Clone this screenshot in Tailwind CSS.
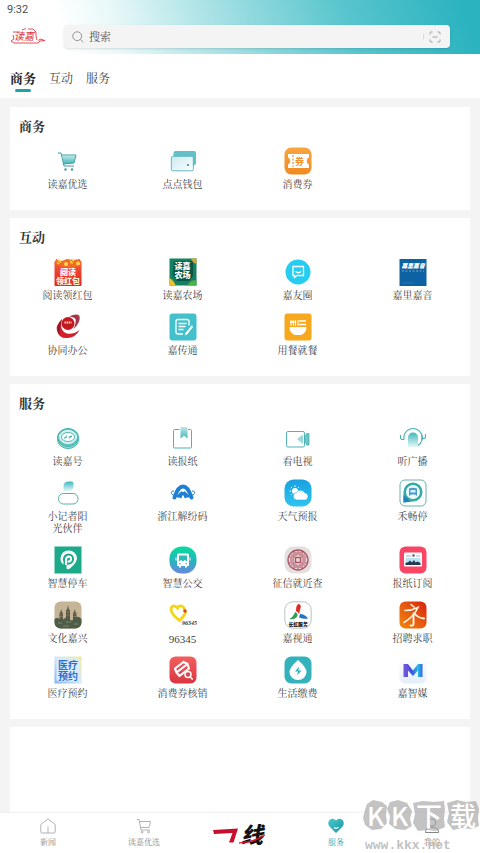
<!DOCTYPE html>
<html lang="zh-CN">
<head>
    <meta charset="UTF-8">
    <meta name="viewport" content="width=device-width, initial-scale=1.0">
    <title>读嘉 - 服务</title>
    <script src="https://cdn.jsdelivr.net/npm/@tailwindcss/browser@4"></script>
</head>
<body class="h-screen flex flex-col overflow-hidden bg-[#f4f4f4] text-[#333] font-['Liberation_Serif','Noto_Serif_CJK_SC','Noto_Sans_CJK_SC',serif]">

    <!-- gradientes compartilhados -->
    <svg class="absolute w-0 h-0" aria-hidden="true">
        <defs>
            <linearGradient id="teal" x1="0" y1="0" x2="0" y2="1"><stop offset="0" stop-color="#3fb9be"/><stop offset="1" stop-color="#e6f7f7"/></linearGradient>
            <linearGradient id="tealUp" x1="0" y1="0" x2="0" y2="1"><stop offset="0" stop-color="#bfe8e8"/><stop offset="1" stop-color="#3db6bb"/></linearGradient>
            <linearGradient id="wallet" x1="0" y1="0" x2="1" y2="1"><stop offset="0" stop-color="#c9e9ee"/><stop offset="1" stop-color="#ffffff"/></linearGradient>
            <linearGradient id="orange" x1="0" y1="0" x2="0" y2="1"><stop offset="0" stop-color="#f9a53f"/><stop offset="1" stop-color="#f08a1f"/></linearGradient>
            <linearGradient id="red" x1="0" y1="0" x2="0" y2="1"><stop offset="0" stop-color="#f4593c"/><stop offset="1" stop-color="#e3251f"/></linearGradient>
            <linearGradient id="sky" x1="0" y1="0" x2="0" y2="1"><stop offset="0" stop-color="#19a0e0"/><stop offset="1" stop-color="#2fc4f0"/></linearGradient>
            <linearGradient id="bus" x1="0" y1="0" x2="0" y2="1"><stop offset="0" stop-color="#06dc9c"/><stop offset="0.5" stop-color="#25b7bb"/><stop offset="1" stop-color="#6a86e0"/></linearGradient>
            <linearGradient id="fire" x1="0" y1="1" x2="1" y2="0"><stop offset="0" stop-color="#f2870c"/><stop offset="0.5" stop-color="#e85a10"/><stop offset="1" stop-color="#d5210c"/></linearGradient>
            <linearGradient id="med" x1="0" y1="1" x2="1" y2="0"><stop offset="0" stop-color="#7fb4f5"/><stop offset="0.5" stop-color="#d3e9fb"/><stop offset="1" stop-color="#f6e99a"/></linearGradient>
            <linearGradient id="rose" x1="0" y1="0" x2="0" y2="1"><stop offset="0" stop-color="#f0605f"/><stop offset="1" stop-color="#dc3540"/></linearGradient>
            <linearGradient id="mm" x1="0" y1="0" x2="1" y2="0"><stop offset="0" stop-color="#7a52dc"/><stop offset="0.45" stop-color="#3a55d8"/><stop offset="0.75" stop-color="#25c2e8"/><stop offset="1" stop-color="#3d62da"/></linearGradient>
            <linearGradient id="mbg" x1="0" y1="0" x2="0" y2="1"><stop offset="0" stop-color="#ffffff"/><stop offset="1" stop-color="#e3eefb"/></linearGradient>
            <linearGradient id="heart" x1="0" y1="0" x2="1" y2="1"><stop offset="0" stop-color="#4cc9cd"/><stop offset="1" stop-color="#1695a4"/></linearGradient>
        </defs>
    </svg>

    <header class="shrink-0 bg-[linear-gradient(72deg,#fff_14%,#e9f8f8_25%,#93dadf_52%,#58c5cd_72%,#2bb3c0_96%)]">
        <div class="h-5 pl-[7px] text-[11px] leading-5 text-[#3f5255] font-[Roboto,sans-serif]">9:32</div>
        <div class="flex items-center pl-2.5 pr-[30px] pt-[5px] pb-[6px]">
            <svg class="w-9 h-5 mr-[18px] shrink-0 overflow-visible" viewBox="0 0 36 20" role="img" aria-label="读嘉">
                <path d="M3 5h7M12 3l4-1.500M18 2h5l3 3v4l1 4M3 8l1 4-3 2 3 2h24l2-2 5-.5-5-1.500-1.500 2" fill="none" stroke="#df3b45" stroke-width="0.9"/>
                <text x="4" y="13" font-size="10" fill="#d9303b" font-style="italic" font-family="Noto Sans CJK SC, sans-serif">读嘉</text>
            </svg>
            <label class="flex-1 flex items-center h-[23px] px-2 rounded-sm bg-[#f4f4f4] shadow-sm">
                <svg class="w-3 h-3 mr-[5px]" viewBox="0 0 12 12" fill="none" stroke="#888" stroke-width="0.9"><circle cx="5.2" cy="5.2" r="4.4"/><path d="M8.4 8.4l3 3"/></svg>
                <input type="search" placeholder="搜索" aria-label="搜索" class="flex-1 min-w-0 bg-transparent outline-none text-[11px] leading-4 placeholder:text-[#555]">
                <span class="w-px h-1.5 mr-1 bg-[#ddd]"></span>
                <button type="button" aria-label="扫一扫">
                    <svg class="w-3.5 h-3.5 block" viewBox="0 0 14 14" fill="none" stroke="#999" stroke-width="0.9"><path d="M2 4.500V3a1 1 0 011-1h1.500M9.500 2H11a1 1 0 011 1v1.500M12 9.500V11a1 1 0 01-1 1H9.500M4.500 12H3a1 1 0 01-1-1V9.500M4.500 7h5"/></svg>
                </button>
            </label>
        </div>
    </header>

    <nav class="shrink-0 h-11 flex items-start gap-[13px] pl-2.5 pt-4 bg-white text-[12px] leading-[18px] text-[#444]">
        <a href="#s1" class="flex flex-col items-center text-[13px] font-bold text-[#222]">商务<span class="w-4 h-[3px] mt-px rounded-full bg-[#1fa3a9]"></span></a>
        <a href="#s2">互动</a>
        <a href="#s3">服务</a>
    </nav>

    <main class="flex-1 min-h-0 overflow-hidden flex flex-col gap-2 px-2.5 pt-[9px]">
        <section id="s1" class="shrink-0 bg-white pt-2.5 pb-[19px]">
            <h2 class="pl-[9px] text-[13px] leading-5 font-bold">商务</h2>
            <div class="grid grid-cols-4 gap-y-[11px] mt-2.5 text-[10px] leading-3 text-center text-[#444]">
                <a href="#" class="flex flex-col items-center gap-1">
                    <svg class="w-7 h-7" viewBox="0 0 28 28"><path d="M8.500 8.500l13 .5-2 7-10 1z" fill="url(#tealUp)"/><path d="M4 6h3l3 13h10M8 8h14l-2 8-10.500 1" fill="none" stroke="#3a9ea4" stroke-width="1"/><circle cx="11.500" cy="22.500" r="1.200" fill="#3a9ea4"/><circle cx="18" cy="22.500" r="1.200" fill="#3a9ea4"/></svg>
                    <span>读嘉优选</span>
                </a>
                <a href="#" class="flex flex-col items-center gap-1">
                    <svg class="w-7 h-7" viewBox="0 0 28 28"><path d="M4.500 9V6a2 2 0 012-2H25a2 2 0 012 2v11l-3 2V9z" fill="#62c0c9"/><rect x="2.300" y="9.300" width="22" height="14.500" rx="1.500" fill="url(#wallet)" stroke="#4fb3bc" stroke-width="0.9"/><circle cx="19" cy="18" r="1.100" fill="#3a8f98"/></svg>
                    <span>点点钱包</span>
                </a>
                <a href="#" class="flex flex-col items-center gap-1">
                    <svg class="w-7 h-7" viewBox="0 0 28 28"><rect x="0.500" y="0.500" width="27" height="27" rx="7" fill="url(#orange)"/><path d="M4 7h21v3.500c-3 1-3 6 0 7V21H4v-3.500c3-1 3-6 0-7z" fill="#fff"/><path d="M9 8v12" stroke="#c77a2a" stroke-width="1" stroke-dasharray="2 1.500"/><text x="11" y="17.500" font-size="9" font-weight="bold" fill="#f0912a" font-family="Noto Sans CJK SC, sans-serif">券</text></svg>
                    <span>消费券</span>
                </a>
            </div>
        </section>

        <section id="s2" class="shrink-0 bg-white pt-2.5 pb-[19px]">
            <h2 class="pl-[9px] text-[13px] leading-5 font-bold">互动</h2>
            <div class="grid grid-cols-4 gap-y-[11px] mt-2.5 text-[10px] leading-3 text-center text-[#444]">
                <a href="#" class="flex flex-col items-center gap-1">
                    <svg class="w-7 h-7 overflow-visible" viewBox="0 0 28 28" font-family="Noto Sans CJK SC, sans-serif" font-weight="900" fill="#fff"><rect x="0.500" y="3" width="27" height="25" rx="1" fill="url(#red)"/><path d="M.5 6L2 1l6 2 5-2 6 1 7-1 1.500 6q-14 6-27-1z" fill="#f26a24"/><circle cx="5" cy="4" r="2.300" fill="#ffc93c"/><circle cx="12" cy="6" r="2" fill="#ffd95a"/><circle cx="18" cy="3.500" r="2.200" fill="#ffc23a"/><circle cx="24" cy="5.500" r="2" fill="#ffd34d"/><path d="M3 3l4 3M17 2l3 3" stroke="#d9401c" stroke-width="0.8"/><text x="6" y="17" font-size="8">阅读</text><text x="2" y="26" font-size="8" fill="#fff3d6">领红包</text></svg>
                    <span>阅读领红包</span>
                </a>
                <a href="#" class="flex flex-col items-center gap-1">
                    <svg class="w-7 h-7" viewBox="0 0 28 28" font-family="Noto Sans CJK SC, sans-serif" font-weight="900" fill="#fff"><rect x="0.500" y="0.500" width="27" height="27" fill="#13805f"/><path d="M5 3h19v15l-4 5H8l-4-5z" fill="#085745"/><path d="M.5 20q5 3 6 7.500h-6z" fill="#f0bf2a"/><path d="M22 .5h5.500v5.500q-4-1-5.500-5.500z" fill="#caa83a"/><path d="M18 27.500q4-6 9.500-5v5z" fill="#4fae4e"/><text x="5.500" y="11" font-size="8">读嘉</text><text x="5.500" y="20" font-size="8">农场</text></svg>
                    <span>读嘉农场</span>
                </a>
                <a href="#" class="flex flex-col items-center gap-1">
                    <svg class="w-7 h-7" viewBox="0 0 28 28"><circle cx="14" cy="14" r="12.500" fill="#27cdf0"/><path d="M9 8.500h10.500v9H13l-2.500 2v-2H9z" fill="none" stroke="#fff" stroke-width="1.300"/><path d="M11.500 13.500q3 2.500 5.500 0" fill="none" stroke="#fff" stroke-width="1.200"/></svg>
                    <span>嘉友圈</span>
                </a>
                <a href="#" class="flex flex-col items-center gap-1">
                    <svg class="w-7 h-7" viewBox="0 0 28 28" fill="#fff"><rect x="0.500" y="1" width="27" height="27" fill="#0d62a3"/><text x="2.500" y="10" font-size="5.800" font-weight="900" font-style="italic" font-family="Noto Sans CJK SC, sans-serif">嘉里嘉音</text><path d="M3 13h22" stroke="#7fb3dc" stroke-width="0.9" stroke-dasharray="2 1.500"/><path d="M4 25h10" stroke="#2f86c4" stroke-width="0.700"/></svg>
                    <span>嘉里嘉音</span>
                </a>
                <a href="#" class="flex flex-col items-center gap-1">
                    <svg class="w-7 h-7" viewBox="0 0 28 28"><path d="M15 3.500q8-3.500 10.500-.5 1.500 6-6 13 3-7 2-10-2-2.500-6.500-2.500z" fill="#a8334a"/><path d="M8 6Q1 13 3 18q2 8 11 7 8-1 11.500-8-7 5-12.500 3.500Q5 18 8 6z" fill="#d2202c"/><path d="M5 10q-3.500 7 1 11.500Q4.500 17 8 6z" fill="#8b1a2c"/><circle cx="14" cy="10.500" r="6.500" fill="#c5171f"/><path d="M10.500 9.500h7" stroke="#ffc8a0" stroke-width="1.800" stroke-dasharray="1.500 .5"/></svg>
                    <span>协同办公</span>
                </a>
                <a href="#" class="flex flex-col items-center gap-1">
                    <svg class="w-7 h-7" viewBox="0 0 28 28" fill="none" stroke="#fff" stroke-width="1.300"><rect x="0.500" y="0.500" width="27" height="27" rx="3" fill="#43c0cb" stroke="none"/><path d="M20 12V8.500A2 2 0 0018 6.500H9a2 2 0 00-2 2V19a2 2 0 002 2h4.500M10 10.500h7M10 13.500h6M10 16.500h4" stroke-linecap="round"/><path d="M23 12l-6.500 8-.8 2.500 2.600-1.300L24 14z" fill="#fff" stroke="none"/></svg>
                    <span>嘉传通</span>
                </a>
                <a href="#" class="flex flex-col items-center gap-1">
                    <svg class="w-7 h-7" viewBox="0 0 28 28"><rect x="0.500" y="0.500" width="27" height="27" rx="3" fill="#f8a81c"/><path d="M5.500 14h17q0 6-5.500 8h-6q-5.500-2-5.500-8z" fill="#fff"/><path d="M7 7v6M9.300 7v6M11.600 7v6M14 7v6" stroke="#fff" stroke-width="1"/><path d="M6 9h6M15 8h7M15 11.500h7" stroke="#fff" stroke-width="1.300"/></svg>
                    <span>用餐就餐</span>
                </a>
            </div>
        </section>

        <section id="s3" class="shrink-0 bg-white pt-2.5 pb-[19px]">
            <h2 class="pl-[9px] text-[13px] leading-5 font-bold">服务</h2>
            <div class="grid grid-cols-4 gap-y-[11px] mt-2.5 text-[10px] leading-3 text-center text-[#444]">
                <a href="#" class="flex flex-col items-center gap-1">
                    <svg class="w-7 h-7" viewBox="0 0 28 28" fill="none" stroke="#3fb3ae"><ellipse cx="14" cy="15.500" rx="10.500" ry="9" fill="#a8dedb" stroke-width="1"/><ellipse cx="14" cy="13.500" rx="10.500" ry="9" fill="#5fc4c0" stroke-width="1"/><ellipse cx="14" cy="13" rx="8.500" ry="6.500" fill="#c9ecea" stroke="#fff" stroke-width="0.800"/><ellipse cx="14" cy="13" rx="6.500" ry="4.500" fill="#fff" stroke-width="0.900"/><path d="M11 14.500l1.500-3M10 14l3-1M15.500 14.500l1.500-3M14.500 13l3.500-.5" stroke-width="1"/></svg>
                    <span>读嘉号</span>
                </a>
                <a href="#" class="flex flex-col items-center gap-1">
                    <svg class="w-7 h-7" viewBox="0 0 28 28"><path d="M10.500 5.500H5.500a1 1 0 00-1 1V23a1 1 0 001 1h16a1 1 0 001-1V6.500a1 1 0 00-1-1H19" fill="none" stroke="#4fb2b3" stroke-width="1"/><path d="M11.500 3h7v11.500l-3.500-3-3.500 3z" fill="url(#tealUp)"/></svg>
                    <span>读报纸</span>
                </a>
                <a href="#" class="flex flex-col items-center gap-1">
                    <svg class="w-7 h-7" viewBox="0 0 28 28"><rect x="2.500" y="7.500" width="18" height="15.500" rx="1.500" fill="#fff" stroke="#55b3b8" stroke-width="1"/><path d="M13 15l6-4.500v9.500z" fill="#9bd8da"/><path d="M20.500 12l2-1V9.500H25V21h-2.500v-1.500l-2-1z" fill="#6cc5c7" stroke="#3fa8ad" stroke-width="0.700"/></svg>
                    <span>看电视</span>
                </a>
                <a href="#" class="flex flex-col items-center gap-1">
                    <svg class="w-7 h-7" viewBox="0 0 28 28" fill="none" stroke="#43aeb3" stroke-width="1.100"><path d="M9 23V13.500a5 5 0 0110 0V23z" fill="url(#teal)" stroke="none"/><path d="M5 15.500a9.200 9.200 0 1114 6M5 15.500H3a2 2 0 01-1.500-2V11M23 14.500h2a2 2 0 001.500-2V10" /><path d="M23 11v5"/></svg>
                    <span>听广播</span>
                </a>
                <a href="#" class="flex flex-col items-center gap-1">
                    <svg class="w-7 h-7" viewBox="0 0 28 28"><path d="M9.500 12V7.500A5 5 0 0114 2.500h3.500a2 2 0 012 2V8a5 5 0 01-3 4z" fill="url(#teal)"/><rect x="4.500" y="14.500" width="19.500" height="10.500" rx="5" fill="#fff" stroke="#55b3ae" stroke-width="1"/></svg>
                    <span>小记者阳<br>光伙伴</span>
                </a>
                <a href="#" class="flex flex-col items-center gap-1">
                    <svg class="w-7 h-7" viewBox="0 0 28 28" fill="none" stroke="#1f7fd2"><path d="M5 12q-3.500 0-2.500 2.500t4 1.500M23 12q3.500 0 2.500 2.500t-4 1.500" stroke-width="1"/><path d="M5.500 18.500Q9 7.500 14 7.500t8.500 11" stroke-width="4" stroke-linecap="round"/><path d="M8 18l6-5.500 6 5.500M11 19l3-6 3 6" stroke-width="2.500"/><circle cx="14" cy="11.500" r="1.500" fill="#fff" stroke="none"/></svg>
                    <span>浙江解纷码</span>
                </a>
                <a href="#" class="flex flex-col items-center gap-1">
                    <svg class="w-7 h-7" viewBox="0 0 28 28"><rect x="0.500" y="0.500" width="27" height="27" rx="9" fill="url(#sky)"/><circle cx="11" cy="12" r="3" fill="#fff"/><path d="M11 6.500V8M5.500 12H7M7 8l1 1M15 8l-1 1M7 16l1-1" stroke="#fff" stroke-width="1"/><path d="M12.500 21a3.800 3.800 0 010-7.500 5 5 0 018.500.5 3.600 3.600 0 01.5 7z" fill="#fff" stroke="#29b4e8" stroke-width="0.600"/></svg>
                    <span>天气预报</span>
                </a>
                <a href="#" class="flex flex-col items-center gap-1">
                    <svg class="w-7 h-7" viewBox="0 0 28 28"><rect x="1" y="1" width="26" height="26" rx="5" fill="#fff" stroke="#5aa9ad" stroke-width="0.900"/><path d="M4.500 23.500V13a9.500 9.500 0 119.500 9.500z" fill="#35a9a5"/><path d="M4.500 23.500V16l7 6.500z" fill="#1c84bd"/><circle cx="14" cy="13" r="7" fill="#eefafa"/><path d="M10 17V9.500q4-1.500 8 0V17l-2-1.500h-4z" fill="#4b9cd0"/><path d="M11.500 11h5v2.500h-5z" fill="#d9f2ff"/></svg>
                    <span>禾畅停</span>
                </a>
                <a href="#" class="flex flex-col items-center gap-1">
                    <svg class="w-7 h-7" viewBox="0 0 28 28"><rect x="0.500" y="0.500" width="27" height="27" fill="#1caa8a"/><path d="M14.500 4.500a8 8 0 00-8 8q0 4 3 6V13a5 5 0 115.500 5l-2.500 1.500v3q2 1.500 4-.5 6.500-5.500 6.500-10a8 8 0 00-8.500-7.500z" fill="#fff"/><circle cx="14.500" cy="13" r="5.500" fill="#1caa8a"/><path d="M12 19v-5q0-3.500 3-3.500 2.500.5 2 3t-3.500 2" fill="none" stroke="#fff" stroke-width="2"/></svg>
                    <span>智慧停车</span>
                </a>
                <a href="#" class="flex flex-col items-center gap-1">
                    <svg class="w-7 h-7" viewBox="0 0 28 28"><rect x="0.500" y="0.500" width="27" height="27" rx="12" fill="url(#bus)"/><path d="M9.500 7.500h9a1.500 1.500 0 011.500 1.500v11h-2v1.500h-2V20h-4v1.500h-2V20H8V9a1.500 1.500 0 011.500-1.500z" fill="#fff"/><path d="M10 9.500h8v6l-2-1.500-2 1.500-2-1.500-2 1.500z" fill="#2dbbb9"/><path d="M7 11.500v3M21 11.500v3" stroke="#fff" stroke-width="1"/><path d="M10 17.800h1.500M16.500 17.800H18" stroke="#2da9c0" stroke-width="1"/></svg>
                    <span>智慧公交</span>
                </a>
                <a href="#" class="flex flex-col items-center gap-1">
                    <svg class="w-7 h-7" viewBox="0 0 28 28" fill="none" stroke="#ad5365"><rect x="0.500" y="0.500" width="27" height="27" rx="9" fill="#e4e0df" stroke="none"/><circle cx="14" cy="14" r="10" fill="#ecdcdc" stroke-width="1.300"/><rect x="11.500" y="11.500" width="5" height="5" stroke-width="1.500"/><path d="M10 5v6H5M18 5v6h5M10 23v-6H5M18 23v-6h5M12 6v4M14 5v4M16 6v4M12 18v4M14 19v4M16 18v4M6 13h4M6 15h4M18 13h4M18 15h4M7 9h2M19 9h2M7 19h2M19 19h2" stroke-width="1.100"/></svg>
                    <span>征信就近查</span>
                </a>
                <a href="#" class="flex flex-col items-center gap-1">
                    <svg class="w-7 h-7" viewBox="0 0 28 28"><rect x="0.500" y="0.500" width="27" height="27" rx="6" fill="#fb4564"/><rect x="5" y="6.500" width="18" height="14" rx="1" fill="#fff"/><path d="M7 10h5M17 10h4" stroke="#99a" stroke-width="0.800"/><circle cx="14.500" cy="9.500" r="1.300" fill="#7a5560"/><rect x="6.500" y="12" width="15" height="7" fill="#b9e4f3"/><path d="M6.500 19v-2l3-1 1.500-1.500 2 2 2-2.500 1.500 2.500 2-1 3 1.500v2z" fill="#253a52"/></svg>
                    <span>报纸订阅</span>
                </a>
                <a href="#" class="flex flex-col items-center gap-1">
                    <svg class="w-7 h-7" viewBox="0 0 28 28"><rect x="0.500" y="0.500" width="27" height="27" rx="6" fill="#c6b496"/><path d="M5.500 19v-7l1-1 .7-3 .8 3 1 1v7M12 19V9.500l1.200-1.500.8-4 .8 4L16 9.500V19M19 19v-7l1-1 .7-3 .8 3 1 1v7z" fill="#5b5646"/><path d="M6 13h3M6 15.500h3M12.500 11h3M12.500 14h3M19.500 13h3M19.500 15.500h3" stroke="#a3936f" stroke-width="0.600"/><path d="M.5 18q3-2 5 0t5-.5 5 .5 5-.5 7 .5v3.500a6 6 0 01-6 6h-15a6 6 0 01-6-6z" fill="#4d5d48"/><path d="M4 22h4M12 21h5M20 23h4M9 25h6" stroke="#7c8768" stroke-width="1"/></svg>
                    <span>文化嘉兴</span>
                </a>
                <a href="#" class="flex flex-col items-center gap-1">
                    <svg class="w-7 h-7 overflow-visible" viewBox="0 0 28 28"><path d="M15.500 8q-2-3.500-5-3-1.500.5-2 2Q6 4.500 4 5 1 6.500 2.500 10.500q1.500 4 8 9 5-5 6-8" fill="none" stroke="#f3d616" stroke-width="2.800" stroke-linecap="round"/><circle cx="16" cy="10" r="1.800" fill="#d9482a"/><text x="13" y="23.500" font-size="6" font-style="italic" font-weight="bold" fill="#333" font-family="Liberation Serif, serif">96345</text></svg>
                    <span class="text-[11px]">96345</span>
                </a>
                <a href="#" class="flex flex-col items-center gap-1">
                    <svg class="w-7 h-7" viewBox="0 0 28 28"><rect x="0.800" y="0.800" width="26.400" height="26.400" rx="8" fill="#fff" stroke="#a9b5ad" stroke-width="0.800"/><path d="M12 10q0-7 3-7 3 1 1 6l-1 4q-1-2-3-3z" fill="#df2a26"/><path d="M11 11q3 1 2.500 4-3 4-8 3 4-2 5.500-7z" fill="#2c9e52"/><path d="M16 13q5 0 8 4.500-4 1-9-1z" fill="#2472c8"/><text x="4.500" y="24.500" font-size="4.800" font-weight="900" fill="#222" font-family="Noto Sans CJK SC, sans-serif">长虹服务</text></svg>
                    <span>嘉视通</span>
                </a>
                <a href="#" class="flex flex-col items-center gap-1">
                    <svg class="w-7 h-7" viewBox="0 0 28 28" fill="none" stroke="#fff6e0" stroke-linecap="round"><rect x="0.500" y="0.500" width="27" height="27" rx="6" fill="url(#fire)" stroke="none"/><path d="M12 3.500l3 2.500M6 9.500q7 0 13-3-4 9-14 15" stroke-width="1.600"/><path d="M14.500 13v10q0 2-3 1.500M15 12q4 5 10 5.500" stroke-width="1.900"/></svg>
                    <span>招聘求职</span>
                </a>
                <a href="#" class="flex flex-col items-center gap-1">
                    <svg class="w-7 h-7 overflow-visible" viewBox="0 0 28 28" font-family="Noto Sans CJK SC, sans-serif" font-weight="bold" fill="#2b6cd4"><rect x="0.500" y="0.500" width="27" height="27" fill="url(#med)"/><rect x="2.500" y="2.500" width="23" height="23" rx="2" fill="#d9ecfb"/><text x="4" y="12.500" font-size="10">医疗</text><text x="4" y="23.500" font-size="10">预约</text></svg>
                    <span>医疗预约</span>
                </a>
                <a href="#" class="flex flex-col items-center gap-1">
                    <svg class="w-7 h-7" viewBox="0 0 28 28" fill="none" stroke="#fff" stroke-linecap="round" stroke-linejoin="round"><rect x="0.500" y="0.500" width="27" height="27" rx="6" fill="url(#rose)" stroke="none"/><path d="M6 12.500l8.500-6.500M7.500 16.500L18.500 8M10.500 20L20 12.500M6 12.500l1.500 4M14.500 6l4 2M18.500 8l1.500 4.500M7.500 16.500l3 3.500" stroke-width="2.200"/><circle cx="19" cy="18.500" r="3" fill="#e2434a" stroke-width="1.500"/><path d="M21.200 21l2 2" stroke-width="1.700"/></svg>
                    <span>消费券核销</span>
                </a>
                <a href="#" class="flex flex-col items-center gap-1">
                    <svg class="w-7 h-7" viewBox="0 0 28 28"><rect x="0.500" y="0.500" width="27" height="27" rx="7" fill="#34b2bb"/><path d="M14 4q8.500 7.500 8.500 12a8.500 8 0 01-17 0Q5.500 11.500 14 4z" fill="#fff"/><path d="M15 10.500l-4 5h3l-1 4 4.500-5h-3z" fill="#34b2bb"/></svg>
                    <span>生活缴费</span>
                </a>
                <a href="#" class="flex flex-col items-center gap-1">
                    <svg class="w-7 h-7" viewBox="0 0 28 28"><rect x="0.500" y="0.500" width="27" height="27" rx="6" fill="url(#mbg)"/><path d="M4.500 21V8h4.500l5 6.500L19 8h4.500v13h-4.500v-6.500L14 20l-5-5.500V21z" fill="url(#mm)"/></svg>
                    <span>嘉智媒</span>
                </a>
            </div>
        </section>

        <section class="flex-1 bg-white"></section>
    </main>

    <footer class="relative shrink-0 h-10 bg-white shadow-[0_-1px_2px_#eee]">
        <nav class="grid grid-cols-5 h-full text-[8px] leading-[10px] text-[#888]">
            <a href="#" class="flex flex-col items-center gap-1 pt-[5px]">
                <svg class="w-4 h-4" viewBox="0 0 16 16" fill="none" stroke="#aaa" stroke-width="0.900"><path d="M.8 6.500L8 .8l7.200 5.700V14a1 1 0 01-1 1H1.800a1 1 0 01-1-1zM8 8.500V15"/></svg>
                新闻
            </a>
            <a href="#" class="flex flex-col items-center gap-1 pt-[5px]">
                <svg class="w-4 h-4" viewBox="0 0 16 16" fill="none" stroke="#aaa" stroke-width="0.900"><path d="M1 1.500h2L5 12h9M3.500 3.500H14.500L13 9.500H4.500"/><circle cx="6" cy="14" r="1"/><circle cx="12.500" cy="14" r="1"/></svg>
                读嘉优选
            </a>
            <a href="#" class="flex items-center justify-center" aria-label="一线">
                <svg class="w-14 h-7 overflow-visible" viewBox="0 0 56 28"><path d="M1 11l25-1.500-4.500 14H17l3.500-9.500L2 15z" fill="#c8102e"/><text x="29" y="24" font-size="22" font-weight="900" font-style="italic" fill="#111" font-family="Noto Sans CJK SC, sans-serif">线</text><path d="M27 24q14-1 26-8-10 8-26 8z" fill="#d8152c" stroke="#d8152c" stroke-width="0.800"/></svg>
            </a>
            <a href="#" class="flex flex-col items-center gap-1 pt-[5px] text-[#2aa5b0]" aria-current="page">
                <svg class="w-4 h-4" viewBox="0 0 16 16"><path d="M8 15L1.500 8.500Q-1 5 1.500 2 5-.5 8 2.500 11-.5 14.500 2q2.500 3 0 6.500z" fill="url(#heart)"/><path d="M6 9.500q2.500 2 4.500-.5" fill="none" stroke="#fff" stroke-width="1.200"/></svg>
                服务
            </a>
            <a href="#" class="flex flex-col items-center gap-1 pt-[5px]">
                <svg class="w-4 h-4" viewBox="0 0 16 16" fill="none" stroke="#777" stroke-width="0.900"><circle cx="8" cy="4.500" r="3.700"/><path d="M1.500 14.500q0-5 5-5h3q5 0 5 5z"/></svg>
                我的
            </a>
        </nav>
        <!-- marca d'água -->
        <div class="absolute right-0 bottom-0 w-[118px] pointer-events-none">
            <svg class="w-full overflow-visible" viewBox="0 0 118 54">
                <g fill="#a3a3a3" fill-opacity="0.650"><path d="M5 5l6-4 9 2 5 4-1 9 1 8-6 6-9 1-7-5-2-7 2-8z"/><path d="M28 3l8-2 9 3 5 8-2 8 2 7-7 4-9-1-7-5 1-8-3-7z"/><path d="M51 4l10-2 11 1 10-1 1 9-1 8 1 9-9 4-9-1-9 1-5-8 2-9z"/><path d="M85 4l10-3 9 2 10-1 3 8-1 9 1 8-8 3-9-1-9 2-6-8 2-9z"/></g>
                <g fill="#fff" font-family="Noto Sans CJK SC, sans-serif" font-weight="500"><text x="5" y="27" font-size="26">K</text><text x="29" y="27" font-size="26">K</text><text x="54" y="27" font-size="26">下</text><text x="88" y="27" font-size="26">载</text></g>
                <text x="3" y="50" font-size="13" font-weight="bold" fill="#b5b5b5" fill-opacity="0.850" font-family="Liberation Mono, monospace">www.kkx.net</text>
            </svg>
        </div>
    </footer>
</body>
</html>
